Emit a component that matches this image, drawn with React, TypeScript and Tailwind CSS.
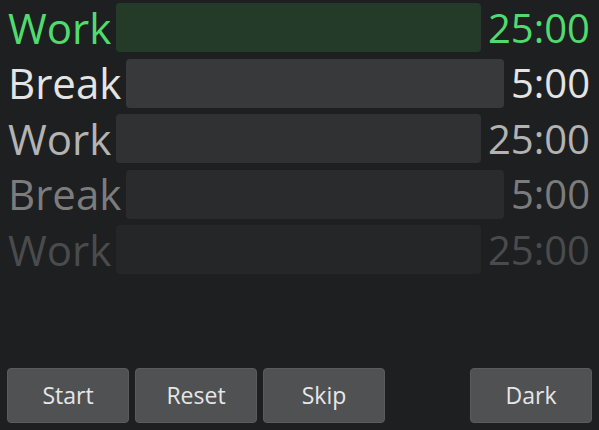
const rows = [
  { label: "Work", time: "25:00", text: "text-[#4fdc6e]", bar: "bg-[#243b2a]" },
  { label: "Break", time: "5:00", text: "text-[#e4e4e4]", bar: "bg-[#38393b]" },
  { label: "Work", time: "25:00", text: "text-[#b3b3b3]", bar: "bg-[#303133]" },
  { label: "Break", time: "5:00", text: "text-[#7c7c7d]", bar: "bg-[#2a2b2d]" },
  { label: "Work", time: "25:00", text: "text-[#4a4b4c]", bar: "bg-[#252628]" },
];

function Button({ children }: { children: React.ReactNode }) {
  return (
    <button className="w-[122px] h-[55px] rounded-[4px] bg-[#505153] border border-[#5a5b5d] text-[#e6e6e6] text-[23px]">
      {children}
    </button>
  );
}

export default function App() {
  return (
    <div
      className="w-[599px] h-[430px] bg-[#1e1f21] flex flex-col overflow-hidden"
      style={{ fontFamily: '"Open Sans", "DejaVu Sans", sans-serif' }}
    >
      <div className="flex flex-col gap-[6.5px] pt-[3px] pl-[8px] pr-[9px]">
        {rows.map((row, i) => (
          <div key={i} className={`flex items-center h-[49px] ${row.text}`}>
            <span className="text-[42px] leading-none pr-[5px]">{row.label}</span>
            <div className={`flex-1 h-full rounded-[4px] ${row.bar}`}></div>
            <span className="text-[40px] leading-none pl-[7px]">{row.time}</span>
          </div>
        ))}
      </div>
      <div className="flex-1"></div>
      <div className="flex items-center gap-[6px] px-[7px] pb-[7px]">
        <Button>Start</Button>
        <Button>Reset</Button>
        <Button>Skip</Button>
        <div className="flex-1"></div>
        <Button>Dark</Button>
      </div>
    </div>
  );
}
